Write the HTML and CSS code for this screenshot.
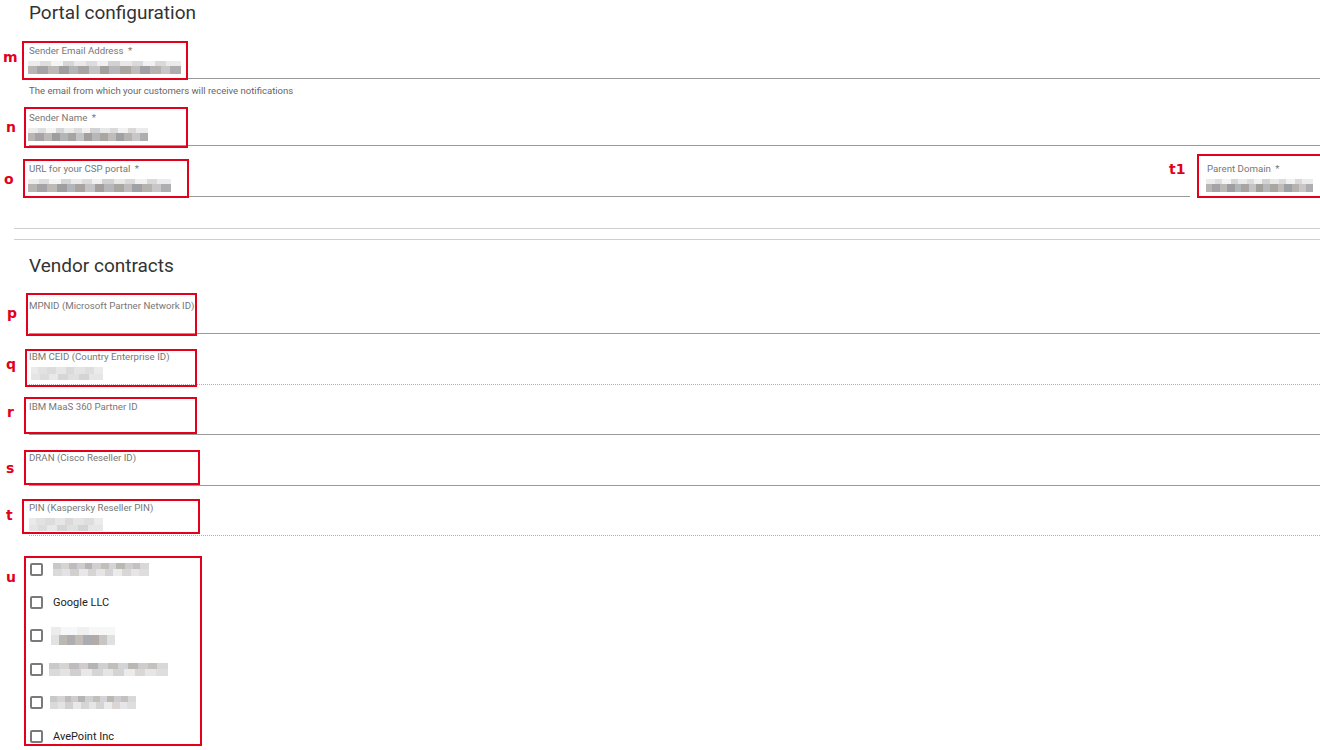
FILE: index.html
```html
<!DOCTYPE html>
<html lang="en">
<head>
<meta charset="utf-8">
<title>Portal configuration</title>
<link rel="stylesheet" href="styles.css">
</head>
<body>
<div class="page">
  <section class="section">
    <h2 class="title">Portal configuration</h2>

    <div class="field f-m">
      <div class="label">Sender Email Address <span class="req">*</span></div>
      <div class="value"><span class="blur bw-m"></span></div>
      <div class="ann a-m"><span class="tag t-m">m</span></div>
    </div>
    <div class="hint">The email from which your customers will receive notifications</div>

    <div class="field f-n">
      <div class="label">Sender Name <span class="req">*</span></div>
      <div class="value"><span class="blur bw-n"></span></div>
      <div class="ann a-n"><span class="tag t-n">n</span></div>
    </div>

    <div class="row">
      <div class="field grow">
        <div class="label">URL for your CSP portal <span class="req">*</span></div>
        <div class="value"><span class="blur bw-o"></span></div>
        <div class="ann a-o"><span class="tag t-o">o</span></div>
      </div>
      <div class="field f-pd">
        <div class="label">Parent Domain <span class="req">*</span></div>
        <div class="value"><span class="blur bw-pd"></span></div>
        <div class="ann a-t1"><span class="tag t-t1">t1</span></div>
      </div>
    </div>
  </section>

  <div class="sep sep-1"></div>
  <div class="sep sep-2"></div>

  <section class="section">
    <h2 class="title title-v">Vendor contracts</h2>

    <div class="field vf vf-first">
      <div class="label">MPNID (Microsoft Partner Network ID)</div>
      <div class="value"></div>
      <div class="ann a-p"><span class="tag t-p">p</span></div>
    </div>
    <div class="field vf dotted">
      <div class="label">IBM CEID (Country Enterprise ID)</div>
      <div class="value"><span class="blur light bw-q"></span></div>
      <div class="ann a-q"><span class="tag t-q">q</span></div>
    </div>
    <div class="field vf">
      <div class="label">IBM MaaS 360 Partner ID</div>
      <div class="value"></div>
      <div class="ann a-r"><span class="tag t-r">r</span></div>
    </div>
    <div class="field vf">
      <div class="label">DRAN (Cisco Reseller ID)</div>
      <div class="value"></div>
      <div class="ann a-s"><span class="tag t-s">s</span></div>
    </div>
    <div class="field vf dotted">
      <div class="label">PIN (Kaspersky Reseller PIN)</div>
      <div class="value"><span class="blur light bw-t"></span></div>
      <div class="ann a-t"><span class="tag t-t">t</span></div>
    </div>

    <div class="checks">
      <label class="check"><span class="box"></span><span class="blur inv bw-c1"></span></label>
      <label class="check"><span class="box"></span><span class="ctext">Google LLC</span></label>
      <label class="check"><span class="box"></span><span class="blur inv tall bw-c3"></span></label>
      <label class="check"><span class="box"></span><span class="blur inv bw-c4"></span></label>
      <label class="check"><span class="box"></span><span class="blur inv bw-c5"></span></label>
      <label class="check"><span class="box"></span><span class="ctext">AvePoint Inc</span></label>
      <div class="ann a-u"><span class="tag t-u">u</span></div>
    </div>
  </section>
</div>
</body>
</html>
```

FILE: styles.css
```css
html, body {
  margin: 0;
  padding: 0;
  overflow: hidden;
  background: #fff;
}

.page {
  width: 1320px;
  height: 750px;
  overflow: hidden;
  position: relative;
  font-family: Roboto, "Liberation Sans", Arial, sans-serif;
  color: #333;
}

.section {
  padding-left: 29px;
}

.title {
  margin: 0;
  padding-top: 1px;
  font-size: 19px;
  line-height: 24px;
  font-weight: 400;
  color: #333;
}

.field {
  position: relative;
  border-bottom: 1px solid #9a9a9a;
}

.f-m {
  margin-top: 20px;
}

.label {
  font-size: 9.7px;
  line-height: 12px;
  color: #777;
  white-space: nowrap;
}

.req {
  margin-left: 2px;
}

.value {
  height: 21px;
  display: flex;
  align-items: center;
}

.hint {
  margin-top: 6px;
  margin-bottom: 15px;
  font-size: 9.55px;
  line-height: 12px;
  color: #666;
}

.row {
  display: flex;
  margin-top: 17px;
}

.grow {
  flex: 1;
}

.f-pd {
  width: 113px;
  margin-left: 17px;
}

.sep {
  height: 1px;
  background: #cfcfcf;
  margin-left: 14px;
}

.sep-1 {
  margin-top: 31px;
}

.sep-2 {
  margin-top: 10px;
}

.title-v {
  margin-top: 13px;
}

.vf {
  margin-bottom: 16.5px;
}

.vf-first {
  margin-top: 22px;
}

.dotted {
  border-bottom: 1px dotted #b0b0b0;
}

/* pixelated (redacted) values */
.blur {
  display: inline-block;
  height: 13px;
  background-repeat: no-repeat;
  background-position: left top, left bottom;
  background-size: 100% 5px, 100% 8px;
  background-image:
    linear-gradient(90deg, #ececec 0 8%, #dedede 8% 15%, #f4f4f4 15% 23%, #d6d6d6 23% 30%, #eaeaea 30% 38%, #dcdcdc 38% 45%, #f0f0f0 45% 52%, #d2d2d2 52% 60%, #e8e8e8 60% 68%, #dadada 68% 75%, #f1f1f1 75% 83%, #d9d9d9 83% 90%, #ebebeb 90% 100%),
    linear-gradient(90deg, #b9b5b3 0 6%, #a5a3a6 6% 13%, #bdb9b6 13% 20%, #9e9da0 20% 27%, #b3b6b9 27% 33%, #a7a4a2 33% 40%, #c4c4c6 40% 47%, #a39f9d 47% 53%, #b7b7ba 53% 60%, #aaa6a2 60% 67%, #c0bcbb 67% 73%, #9fa1a5 73% 80%, #b5b2b0 80% 87%, #c8c6c6 87% 93%, #aeadb0 93% 100%);
}

.blur.light {
  background-size: 100% 7px, 100% 7px;
  background-image:
    linear-gradient(90deg, #eaeaea 0 10%, #e2e2e2 10% 22%, #dcdcdc 22% 35%, #e6e6e6 35% 48%, #dadada 48% 60%, #e4e4e4 60% 75%, #dedede 75% 88%, #ebebeb 88% 100%),
    linear-gradient(90deg, #e4e4e4 0 12%, #dcdcdc 12% 25%, #e8e8e8 25% 38%, #d6d6d6 38% 52%, #e0e0e0 52% 66%, #d4d4d4 66% 80%, #e6e6e6 80% 100%);
}

.blur.inv {
  background-size: 100% 6px, 100% 7px;
  background-image:
    linear-gradient(90deg, #c9c9c9 0 8%, #d6d3d0 8% 17%, #bdbdbf 17% 25%, #cfcccb 25% 33%, #b5b5b8 33% 41%, #d0d0d2 41% 50%, #c2bfbb 50% 58%, #d4d4d6 58% 66%, #bbb8b4 66% 75%, #cdcdcf 75% 83%, #c4c1be 83% 91%, #d8d8d8 91% 100%),
    linear-gradient(90deg, #dadada 0 9%, #e3e3e5 9% 18%, #d2d0ce 18% 27%, #e8e8ea 27% 36%, #d7d5d3 36% 45%, #e5e5e5 45% 54%, #d4d4d6 54% 63%, #ebebeb 63% 72%, #d9d6d4 72% 81%, #e6e6e8 81% 90%, #dedede 90% 100%);
}

.blur.tall {
  height: 18px;
  background-size: 100% 8px, 100% 10px;
  background-image:
    linear-gradient(90deg, #ececec 0 15%, #f6f7f9 15% 40%, #f0f0f0 40% 60%, #f7f7f7 60% 100%),
    linear-gradient(90deg, #e2e2e2 0 12%, #bbb7b3 12% 25%, #aeaeb1 25% 38%, #c2bdb8 38% 50%, #abacaf 50% 62%, #b2aba8 62% 75%, #c6c7c4 75% 88%, #e0e0e0 88% 100%);
}

.bw-m { width: 153px; margin-left: -1px; }
.bw-n { width: 120px; margin-left: -1px; }
.bw-o { width: 143px; margin-left: -1px; }
.bw-pd { width: 107px; margin-left: -1px; }
.bw-q { width: 72px; margin-left: 2px; }
.bw-t { width: 74px; }
.bw-c1 { width: 96px; }
.bw-c3 { width: 64px; margin-left: -2px; }
.bw-c4 { width: 119px; margin-left: -4px; }
.bw-c5 { width: 86px; margin-left: -3px; }

/* checkbox list */
.checks {
  position: relative;
  margin-top: 16px;
}

.check {
  height: 33.4px;
  display: flex;
  align-items: center;
  gap: 10px;
  padding-left: 1px;
}

.box {
  width: 13px;
  height: 13px;
  box-sizing: border-box;
  border: 2px solid #7a7a7a;
  border-radius: 2px;
  flex: none;
}

.ctext {
  font-size: 11px;
  color: #222;
}

/* red annotation overlays */
.ann {
  position: absolute;
  box-sizing: border-box;
  border: 2px solid #e2001a;
  pointer-events: none;
}

.tag {
  position: absolute;
  font-family: "DejaVu Sans", Verdana, sans-serif;
  font-weight: 700;
  font-size: 14px;
  line-height: 14px;
  color: #e2001a;
}

.a-m { left: -7px; top: -4px; width: 166px; height: 39px; }
.t-m { left: -21px; top: 7px; }

.a-n { left: -5px; top: -5px; width: 164px; height: 41px; }
.t-n { left: -20px; top: 11px; }

.a-o { left: -6px; top: -4px; width: 166px; height: 39px; }
.t-o { left: -21px; top: 11px; }

.a-t1 { left: -10px; top: -9px; width: 130px; height: 44px; }
.t-t1 { left: -30px; top: 6px; }

.a-p { left: -3px; top: -7px; width: 171px; height: 43px; }
.t-p { left: -21px; top: 11px; }

.a-q { left: -4px; top: -2px; width: 172px; height: 38px; }
.t-q { left: -21px; top: 6px; }

.a-r { left: -5px; top: -4px; width: 173px; height: 37px; }
.t-r { left: -19px; top: 6px; }

.a-s { left: -5px; top: -2px; width: 176px; height: 35px; }
.t-s { left: -20px; top: 9px; }

.a-t { left: -7px; top: -3px; width: 178px; height: 35px; }
.t-t { left: -18px; top: 7px; }

.a-u { left: -5px; top: 3px; width: 178px; height: 190px; }
.t-u { left: -20px; top: 12px; }
```
